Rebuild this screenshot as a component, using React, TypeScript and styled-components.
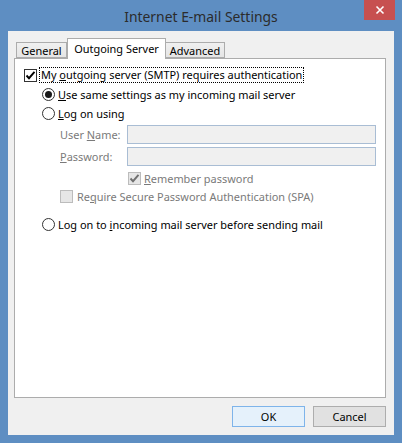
import React from 'react';
import styled, { createGlobalStyle } from 'styled-components';

const Global = createGlobalStyle`
  html, body { margin: 0; padding: 0; }
  body {
    font-family: "Noto Sans", "Open Sans", sans-serif;
    font-size: 10.95px;
    color: #000;
  }
`;

const Window = styled.div`
  width: 402px;
  height: 443px;
  box-sizing: border-box;
  background: #5e8ec2;
  display: flex;
  flex-direction: column;
`;

const TitleBar = styled.div`
  height: 31px;
  display: grid;
  grid-template-columns: 1fr auto 1fr;
  align-items: center;
`;

const Title = styled.div`
  grid-column: 2;
  font-size: 13.9px;
  color: #2b2b2b;
  padding-top: 1px;
`;

const CloseButton = styled.div`
  grid-column: 3;
  justify-self: end;
  align-self: start;
  width: 31px;
  height: 20px;
  margin-right: 7px;
  background: #c75050;
  display: flex;
  align-items: center;
  justify-content: center;
`;

const Client = styled.div`
  flex: 1;
  margin: 0 8px 8px 8px;
  background: #f0f0f0;
  display: flex;
  flex-direction: column;
  padding: 7px 8px 8px 6px;
  box-sizing: border-box;
`;

const TabStrip = styled.div`
  display: flex;
  align-items: flex-end;
  height: 20px;
  padding-left: 2px;
`;

const Tab = styled.div<{ $active?: boolean; $w: number }>`
  width: ${p => p.$w}px;
  height: ${p => (p.$active ? 21 : 16)}px;
  box-sizing: border-box;
  border: 1px solid #acacac;
  border-bottom: ${p => (p.$active ? 'none' : '1px solid #acacac')};
  ${p => (p.$active ? '' : 'border-left: none;')}
  background: ${p => (p.$active ? '#fff' : 'linear-gradient(#f0f0f0, #e5e5e5)')};
  display: flex;
  align-items: center;
  justify-content: center;
  margin-bottom: ${p => (p.$active ? '-1px' : '0')};
  position: relative;
  z-index: ${p => (p.$active ? 1 : 0)};
  padding-bottom: ${p => (p.$active ? '2px' : '0')};
  &:first-child { border-left: 1px solid #acacac; }
`;

const TabAfterActive = styled(Tab)`
  border-left: none;
`;

const Panel = styled.div`
  flex: 1;
  background: #fff;
  border: 1px solid #acacac;
  display: flex;
  flex-direction: column;
  padding-top: 8px;
`;

const Row = styled.div<{ $indent: number; $top: number; $h?: number }>`
  display: flex;
  align-items: center;
  height: ${p => p.$h ?? 16}px;
  margin-left: ${p => p.$indent}px;
  margin-top: ${p => p.$top}px;
`;

const Box = styled.div<{ $disabled?: boolean }>`
  width: 13px;
  height: 13px;
  box-sizing: border-box;
  border: 1px solid ${p => (p.$disabled ? '#bcbcbc' : '#333')};
  background: ${p => (p.$disabled ? '#e6e6e6' : '#fff')};
  display: flex;
  align-items: center;
  justify-content: center;
  flex-shrink: 0;
`;

const Radio = styled.div<{ $on?: boolean }>`
  width: 13px;
  height: 13px;
  box-sizing: border-box;
  border: 1px solid #333;
  border-radius: 50%;
  background: #fff;
  display: flex;
  align-items: center;
  justify-content: center;
  flex-shrink: 0;
  &::after {
    content: '';
    display: ${p => (p.$on ? 'block' : 'none')};
    width: 7px;
    height: 7px;
    border-radius: 50%;
    background: #1a1a1a;
  }
`;

const Label = styled.span<{ $gap: number; $disabled?: boolean }>`
  margin-left: ${p => p.$gap}px;
  color: ${p => (p.$disabled ? '#7a7a7a' : '#000')};
  white-space: nowrap;
`;

const FocusLabel = styled.span`
  margin-left: 2px;
  padding: 0 1px;
  border: 1px dotted #000;
  white-space: nowrap;
  line-height: 14px;
`;

const Key = styled.span`
  text-decoration: underline;
`;

const FieldLabel = styled.span`
  width: 67px;
  color: #7a7a7a;
  white-space: nowrap;
`;

const Input = styled.div`
  width: 249px;
  height: 19px;
  box-sizing: border-box;
  border: 1px solid #a9bdd4;
  background: #f0f0f0;
`;

const Footer = styled.div`
  display: flex;
  justify-content: flex-end;
  gap: 8px;
  margin-top: 8px;
`;

const Button = styled.div<{ $default?: boolean }>`
  width: 73px;
  height: 21px;
  box-sizing: border-box;
  border: 1px solid ${p => (p.$default ? '#7eb4ea' : '#adadad')};
  background: ${p => (p.$default ? '#e5f1fb' : '#e1e1e1')};
  display: flex;
  align-items: center;
  justify-content: center;
`;

const Check = ({ color }: { color: string }) => (
  <svg width="11" height="11" viewBox="0 0 11 11">
    <path d="M1.5 5.5 L4 8.2 L9.5 1.8" fill="none" stroke={color} strokeWidth="1.9" />
  </svg>
);

export default function App() {
  return (
    <>
      <Global />
      <Window>
        <TitleBar>
          <Title>Internet E-mail Settings</Title>
          <CloseButton>
            <svg width="10" height="10" viewBox="0 0 10 10">
              <path d="M1.5 1.5 L8.5 8.5 M8.5 1.5 L1.5 8.5" stroke="#fff" strokeWidth="1.6" />
            </svg>
          </CloseButton>
        </TitleBar>
        <Client>
          <TabStrip>
            <Tab $w={51}>General</Tab>
            <Tab $w={99} $active>Outgoing Server</Tab>
            <TabAfterActive $w={59}>Advanced</TabAfterActive>
          </TabStrip>
          <Panel>
            <Row $indent={9} $top={0}>
              <Box><Check color="#000" /></Box>
              <FocusLabel>My <Key>o</Key>utgoing server (SMTP) requires authentication</FocusLabel>
            </Row>
            <Row $indent={27} $top={3}>
              <Radio $on />
              <Label $gap={3}><Key>U</Key>se same settings as my incoming mail server</Label>
            </Row>
            <Row $indent={27} $top={3}>
              <Radio />
              <Label $gap={3}><Key>L</Key>og on using</Label>
            </Row>
            <Row $indent={45} $top={4} $h={19}>
              <FieldLabel>User <Key>N</Key>ame:</FieldLabel>
              <Input />
            </Row>
            <Row $indent={45} $top={3} $h={19}>
              <FieldLabel><Key>P</Key>assword:</FieldLabel>
              <Input />
            </Row>
            <Row $indent={113} $top={4}>
              <Box $disabled><Check color="#707070" /></Box>
              <Label $gap={3} $disabled><Key>R</Key>emember password</Label>
            </Row>
            <Row $indent={45} $top={2}>
              <Box $disabled />
              <Label $gap={4} $disabled>Re<Key>q</Key>uire Secure Password Authentication (SPA)</Label>
            </Row>
            <Row $indent={27} $top={12}>
              <Radio />
              <Label $gap={3}>Log on to <Key>i</Key>ncoming mail server before sending mail</Label>
            </Row>
          </Panel>
          <Footer>
            <Button $default>OK</Button>
            <Button>Cancel</Button>
          </Footer>
        </Client>
      </Window>
    </>
  );
}
